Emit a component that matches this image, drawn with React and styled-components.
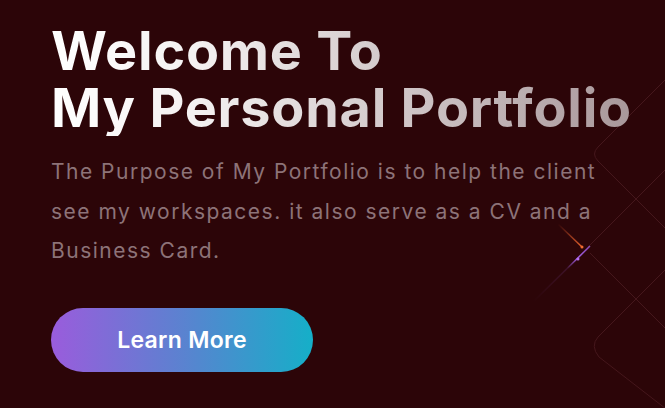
import React from "react";
import styled, { createGlobalStyle } from "styled-components";

const GlobalStyle = createGlobalStyle`
  * { box-sizing: border-box; }
  html, body {
    margin: 0;
    padding: 0;
    background: #2c0508;
  }
  body {
    font-family: Inter, "Noto Sans", sans-serif;
    overflow: hidden;
  }
`;

const Hero = styled.section`
  position: relative;
  width: 665px;
  height: 408px;
  overflow: hidden;
  background: #2c0508;
  padding: 22px 0 0 51px;
  display: flex;
  flex-direction: column;
  align-items: flex-start;
`;

const Decor = styled.svg`
  position: absolute;
  inset: 0;
  width: 100%;
  height: 100%;
  pointer-events: none;
`;

const Title = styled.h1`
  position: relative;
  margin: 0;
  font-size: 54px;
  line-height: 57px;
  font-weight: 700;
  letter-spacing: 0.75px;
  background: linear-gradient(90deg, #ffffff 0%, #f4f1f1 25%, #a8979a 100%);
  -webkit-background-clip: text;
  background-clip: text;
  color: transparent;
`;

const Lead = styled.p`
  position: relative;
  margin: 16px 0 0;
  width: 575px;
  font-size: 21px;
  line-height: 39.5px;
  font-weight: 400;
  letter-spacing: 1.5px;
  color: #8d7378;
`;

const Button = styled.button`
  position: relative;
  margin-top: 37px;
  width: 262px;
  height: 64px;
  border: none;
  border-radius: 32px;
  background: linear-gradient(90deg, #9a5cdc 0%, #5b82d0 50%, #15afc8 100%);
  color: #ffffff;
  font-family: Inter, sans-serif;
  font-size: 23px;
  font-weight: 600;
  letter-spacing: 0.3px;
  cursor: pointer;
`;

const Lines = () => (
  <Decor viewBox="0 0 665 408">
    <defs>
      <linearGradient id="trailPurple" x1="533" y1="302" x2="590" y2="246" gradientUnits="userSpaceOnUse">
        <stop offset="0" stopColor="#a05ce0" stopOpacity="0" />
        <stop offset="0.6" stopColor="#a05ce0" stopOpacity="0.15" />
        <stop offset="0.78" stopColor="#a05ce0" stopOpacity="1" />
        <stop offset="1" stopColor="#a05ce0" stopOpacity="0.8" />
      </linearGradient>
      <linearGradient id="trailOrange" x1="558" y1="224" x2="582" y2="247" gradientUnits="userSpaceOnUse">
        <stop offset="0" stopColor="#e0582a" stopOpacity="0" />
        <stop offset="1" stopColor="#e8622c" stopOpacity="1" />
      </linearGradient>
    </defs>
    <g fill="none" stroke="#45171c" strokeWidth="1">
      <path d="M 690 55 L 598 147 Q 591 154 598 161 L 690 253" />
      <path d="M 690 245 L 598 337 Q 590 346 599 357 L 670 412" />
      <path d="M 588 247 L 680 155" />
      <path d="M 590 253 L 680 343" />
    </g>
    <path d="M 533 302 L 590 246" stroke="url(#trailPurple)" strokeWidth="1.5" />
    <circle cx="578" cy="259" r="1.5" fill="#b56ef0" />
    <path d="M 558 224 L 582 247" stroke="url(#trailOrange)" strokeWidth="1.5" />
    <circle cx="582" cy="247" r="1.5" fill="#f06a30" />
  </Decor>
);

export default function App() {
  return (
    <>
      <GlobalStyle />
      <Hero>
        <Lines />
        <Title>
          Welcome To
          <br />
          My Personal Portfolio
        </Title>
        <Lead>
          The Purpose of My Portfolio is to help the client see my
          workspaces. it also serve as a CV and a Business Card.
        </Lead>
        <Button>Learn More</Button>
      </Hero>
    </>
  );
}
